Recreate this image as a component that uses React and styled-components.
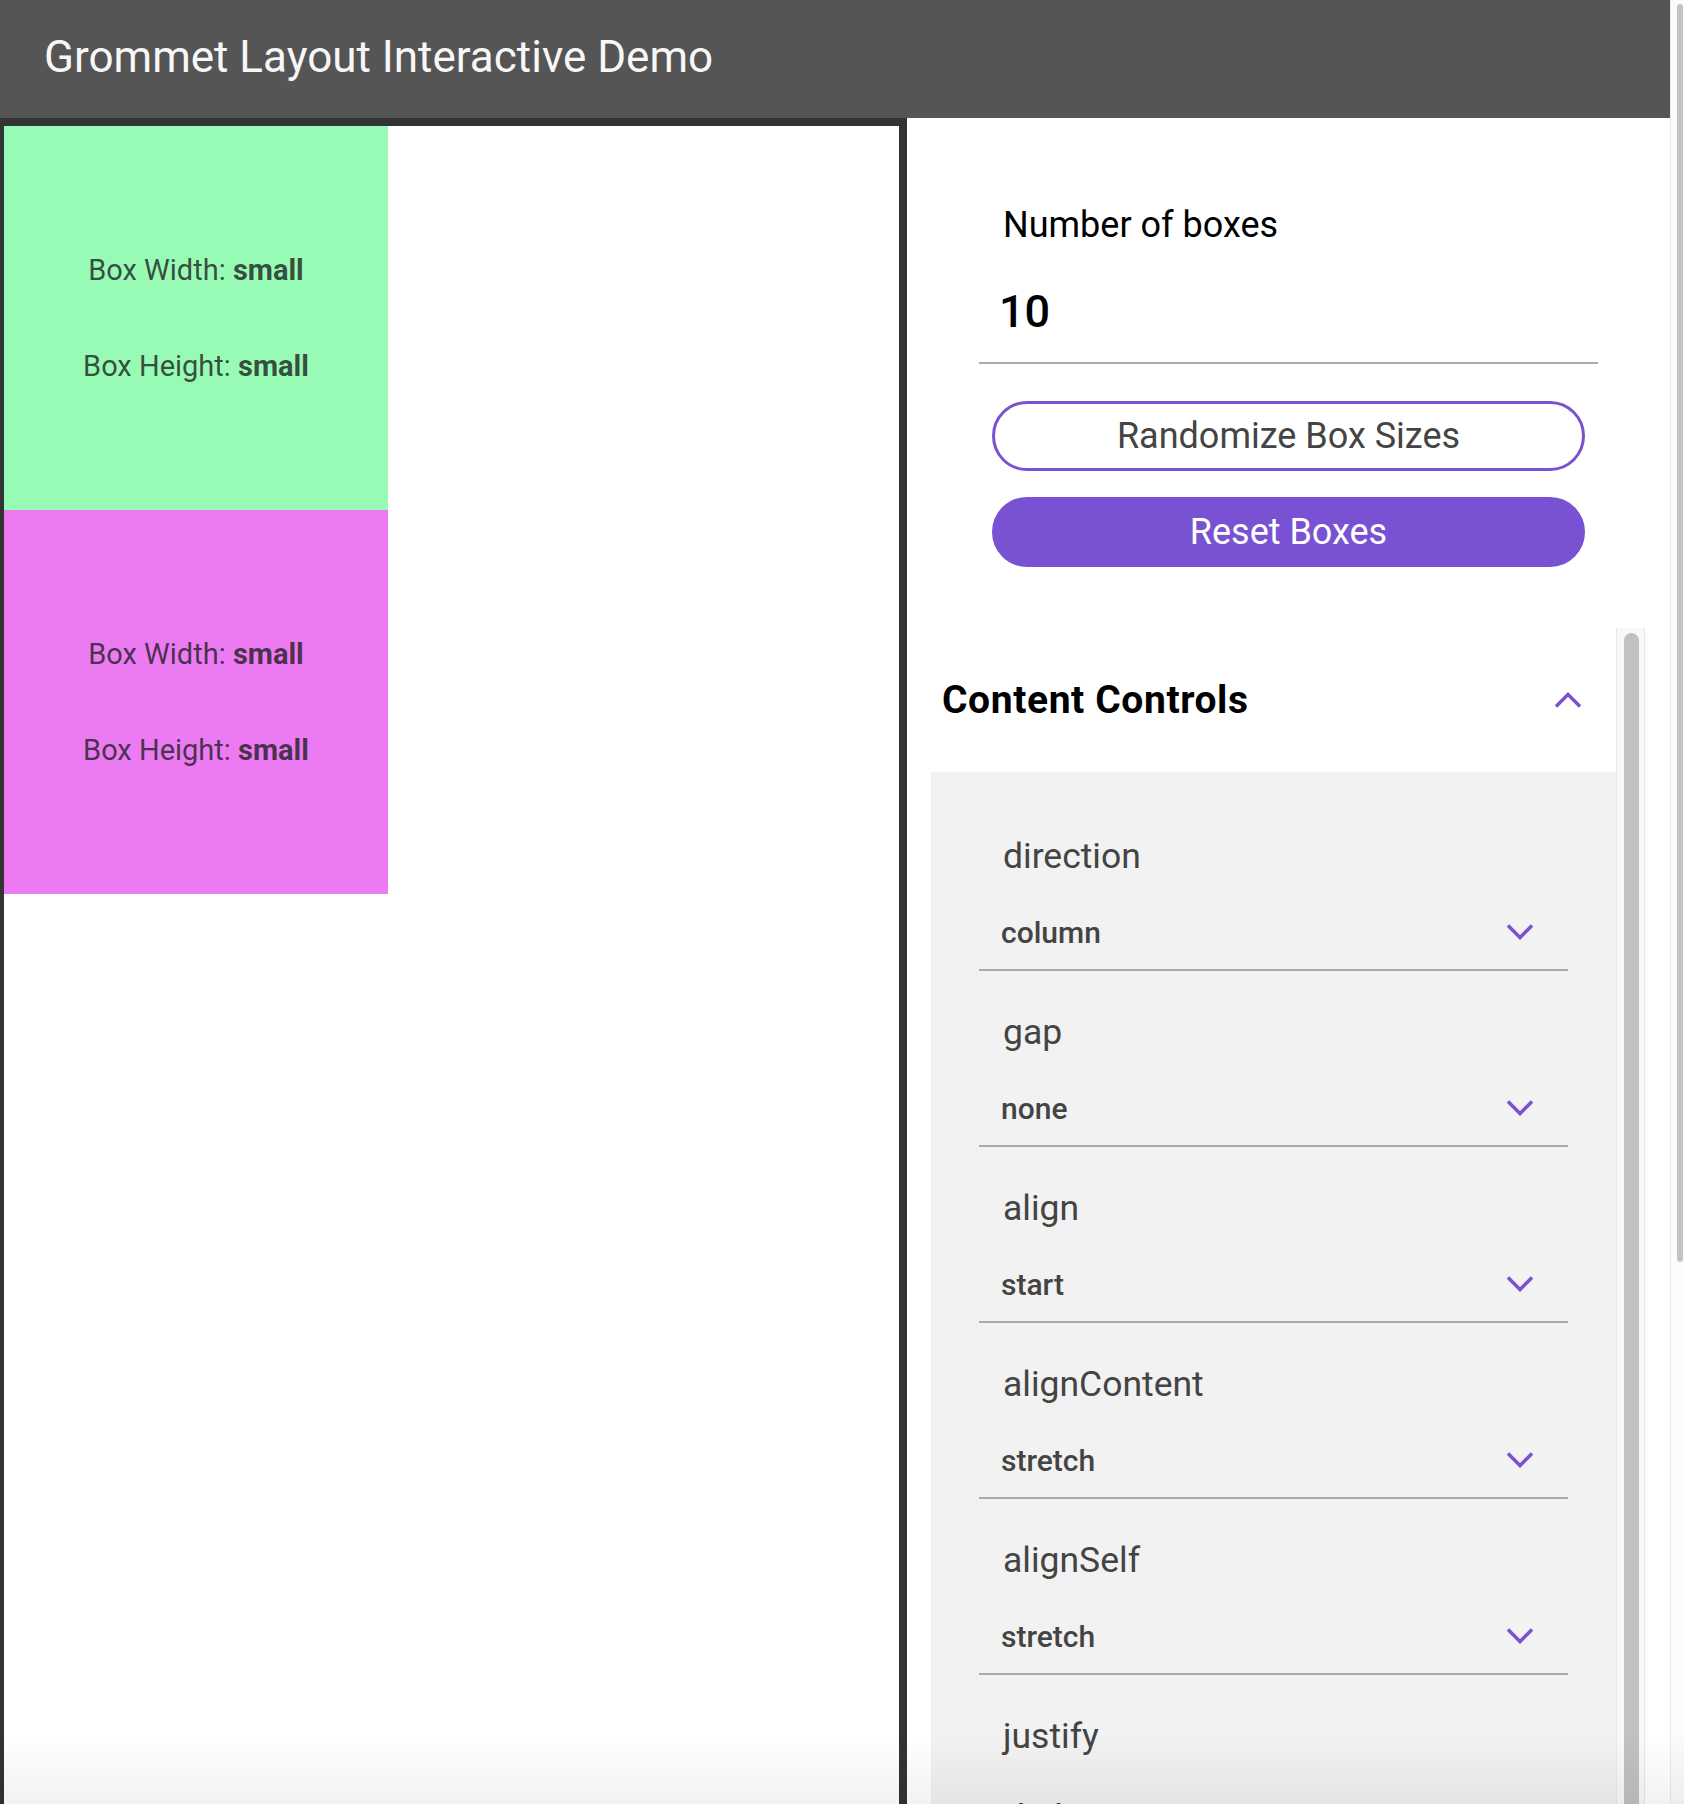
import React from "react";
import styled, { createGlobalStyle } from "styled-components";

const PURPLE = "#7852d2";

const GlobalStyle = createGlobalStyle`
  html, body { margin: 0; padding: 0; overflow: hidden; }
  body {
    font-family: Roboto, "Liberation Sans", Arial, sans-serif;
    background: #ffffff;
  }
`;

const Viewport = styled.div`
  display: flex;
  height: 100vh;
  overflow: hidden;
`;

const Page = styled.div`
  flex: 1;
  min-width: 0;
  display: flex;
  flex-direction: column;
`;

const PageScrollbar = styled.div`
  width: 14px;
  flex: none;
  box-sizing: border-box;
  background: #fbfbfb;
  border-left: 1px solid #ececec;
  padding: 4px 1px 0 6px;
`;

const PageThumb = styled.div`
  height: 1258px;
  background: #c4c4c4;
  border-radius: 4px;
`;

const Header = styled.header`
  height: 118px;
  flex: none;
  background: #555555;
  display: flex;
  align-items: center;
  padding: 0 0 5px 44px;
  box-sizing: border-box;
`;

const Title = styled.h1`
  margin: 0;
  font-size: 44px;
  font-weight: 400;
  color: #f7f7f7;
`;

const Main = styled.div`
  display: flex;
  align-items: stretch;
`;

const Canvas = styled.section`
  width: 907px;
  flex: none;
  box-sizing: border-box;
  border-top: 8px solid #333333;
  border-left: 4px solid #333333;
  border-right: 8px solid #333333;
  display: flex;
  flex-direction: column;
  align-items: flex-start;
`;

const DemoBox = styled.div`
  width: 384px;
  height: 384px;
  background: ${(p) => p.$color};
  display: flex;
  flex-direction: column;
  align-items: center;
  justify-content: center;
  gap: 62px;
`;

const BoxLine = styled.div`
  font-size: 29px;
  line-height: 34px;
  color: rgba(30, 30, 30, 0.8);
  b { font-weight: 700; }
`;

const Controls = styled.aside`
  flex: 1;
  min-width: 0;
  background: #ffffff;
  padding: 86px 25px 48px 24px;
  display: flex;
  flex-direction: column;
`;

const TopSection = styled.div`
  padding: 0 47px 0 48px;
  display: flex;
  flex-direction: column;
`;

const FieldLabel = styled.div`
  font-size: ${(p) => p.$size || 36}px;
  line-height: 42px;
  color: ${(p) => p.$color || "#000"};
  padding-left: ${(p) => p.$indent || 24}px;
`;

const NumberInput = styled.div`
  margin-top: 41px;
  height: 50px;
  line-height: 50px;
  font-size: 45px;
  font-weight: 500;
  color: #000;
  padding: 0 0 25px 20px;
  border-bottom: 2px solid #aaaaaa;
`;

const Button = styled.button`
  margin: ${(p) => p.$mt}px 13px 0;
  height: 70px;
  border-radius: 35px;
  box-sizing: border-box;
  font-family: inherit;
  font-size: 36px;
  border: 3px solid ${PURPLE};
  background: ${(p) => (p.$primary ? PURPLE : "#ffffff")};
  color: ${(p) => (p.$primary ? "#ffffff" : "#444444")};
  cursor: pointer;
`;

const ScrollArea = styled.div`
  margin-top: 61px;
  height: 1900px;
  display: flex;
  align-items: stretch;
  background: #ffffff;
`;

const ScrollContent = styled.div`
  flex: 1;
  min-width: 0;
  overflow: hidden;
`;

const ScrollTrack = styled.div`
  width: 29px;
  flex: none;
  box-sizing: border-box;
  background: #f9f9f9;
  border-left: 1px solid #e6e6e6;
  border-right: 1px solid #e6e6e6;
  padding: 5px 5px 0 7px;
`;

const ScrollThumb = styled.div`
  height: 1500px;
  background: #c1c1c1;
  border-radius: 8px;
`;

const SectionHeader = styled.div`
  height: 144px;
  display: flex;
  align-items: center;
  justify-content: space-between;
  padding: 0 34px 0 11px;
`;

const SectionTitle = styled.h2`
  margin: 0;
  font-size: 39px;
  letter-spacing: 0.6px;
  font-weight: 700;
  color: #000;
`;

const GrayPanel = styled.div`
  background: #f2f2f2;
  padding: 63px 48px 63px;
  display: flex;
  flex-direction: column;
  gap: 40px;
`;

const Control = styled.div`
  display: flex;
  flex-direction: column;
`;

const ValueRow = styled.div`
  margin-top: 27px;
  height: 56px;
  padding: 0 34px 9px 22px;
  border-bottom: 2px solid #aaaaaa;
  display: flex;
  align-items: center;
  justify-content: space-between;
`;

const Value = styled.span`
  font-size: 30px;
  font-weight: 500;
  color: #444444;
`;

const Svg = styled.svg`
  display: block;
  flex: none;
`;

const BottomFade = styled.div`
  position: fixed;
  left: 0;
  right: 0;
  bottom: 0;
  height: 70px;
  pointer-events: none;
  background: linear-gradient(rgba(0, 0, 0, 0), rgba(0, 0, 0, 0.05));
`;

const Chevron = ({ up }) => (
  <Svg width="28" height="18" viewBox="0 0 28 18">
    <polyline
      points={up ? "2,15.5 14,3.5 26,15.5" : "2,2.5 14,14.5 26,2.5"}
      fill="none"
      stroke={PURPLE}
      strokeWidth="3.5"
    />
  </Svg>
);

const boxes = [{ color: "#97fbb6" }, { color: "#ec7af3" }];

const controls = [
  ["direction", "column"],
  ["gap", "none"],
  ["align", "start"],
  ["alignContent", "stretch"],
  ["alignSelf", "stretch"],
  ["justify", "start"],
  ["wrap", "false"],
  ["fill", "false"],
  ["basis", "auto"],
  ["flex", "false"],
  ["pad", "none"],
  ["margin", "none"],
];

export default function App() {
  return (
    <Viewport>
      <GlobalStyle />
      <Page>
        <Header>
          <Title>Grommet Layout Interactive Demo</Title>
        </Header>
        <Main>
          <Canvas>
            {boxes.map((b, i) => (
              <DemoBox key={i} $color={b.color}>
                <BoxLine>
                  Box Width: <b>small</b>
                </BoxLine>
                <BoxLine>
                  Box Height: <b>small</b>
                </BoxLine>
              </DemoBox>
            ))}
          </Canvas>
          <Controls>
            <TopSection>
              <FieldLabel>Number of boxes</FieldLabel>
              <NumberInput>10</NumberInput>
              <Button $mt={37}>Randomize Box Sizes</Button>
              <Button $mt={26} $primary>
                Reset Boxes
              </Button>
            </TopSection>
            <ScrollArea>
              <ScrollContent>
                <SectionHeader>
                  <SectionTitle>Content Controls</SectionTitle>
                  <Chevron up />
                </SectionHeader>
                <GrayPanel>
                  {controls.map(([label, value]) => (
                    <Control key={label}>
                      <FieldLabel $color="#444444" $size={35.5} $indent={24}>
                        {label}
                      </FieldLabel>
                      <ValueRow>
                        <Value>{value}</Value>
                        <Chevron />
                      </ValueRow>
                    </Control>
                  ))}
                </GrayPanel>
              </ScrollContent>
              <ScrollTrack>
                <ScrollThumb />
              </ScrollTrack>
            </ScrollArea>
          </Controls>
        </Main>
      </Page>
      <PageScrollbar>
        <PageThumb />
      </PageScrollbar>
      <BottomFade />
    </Viewport>
  );
}
